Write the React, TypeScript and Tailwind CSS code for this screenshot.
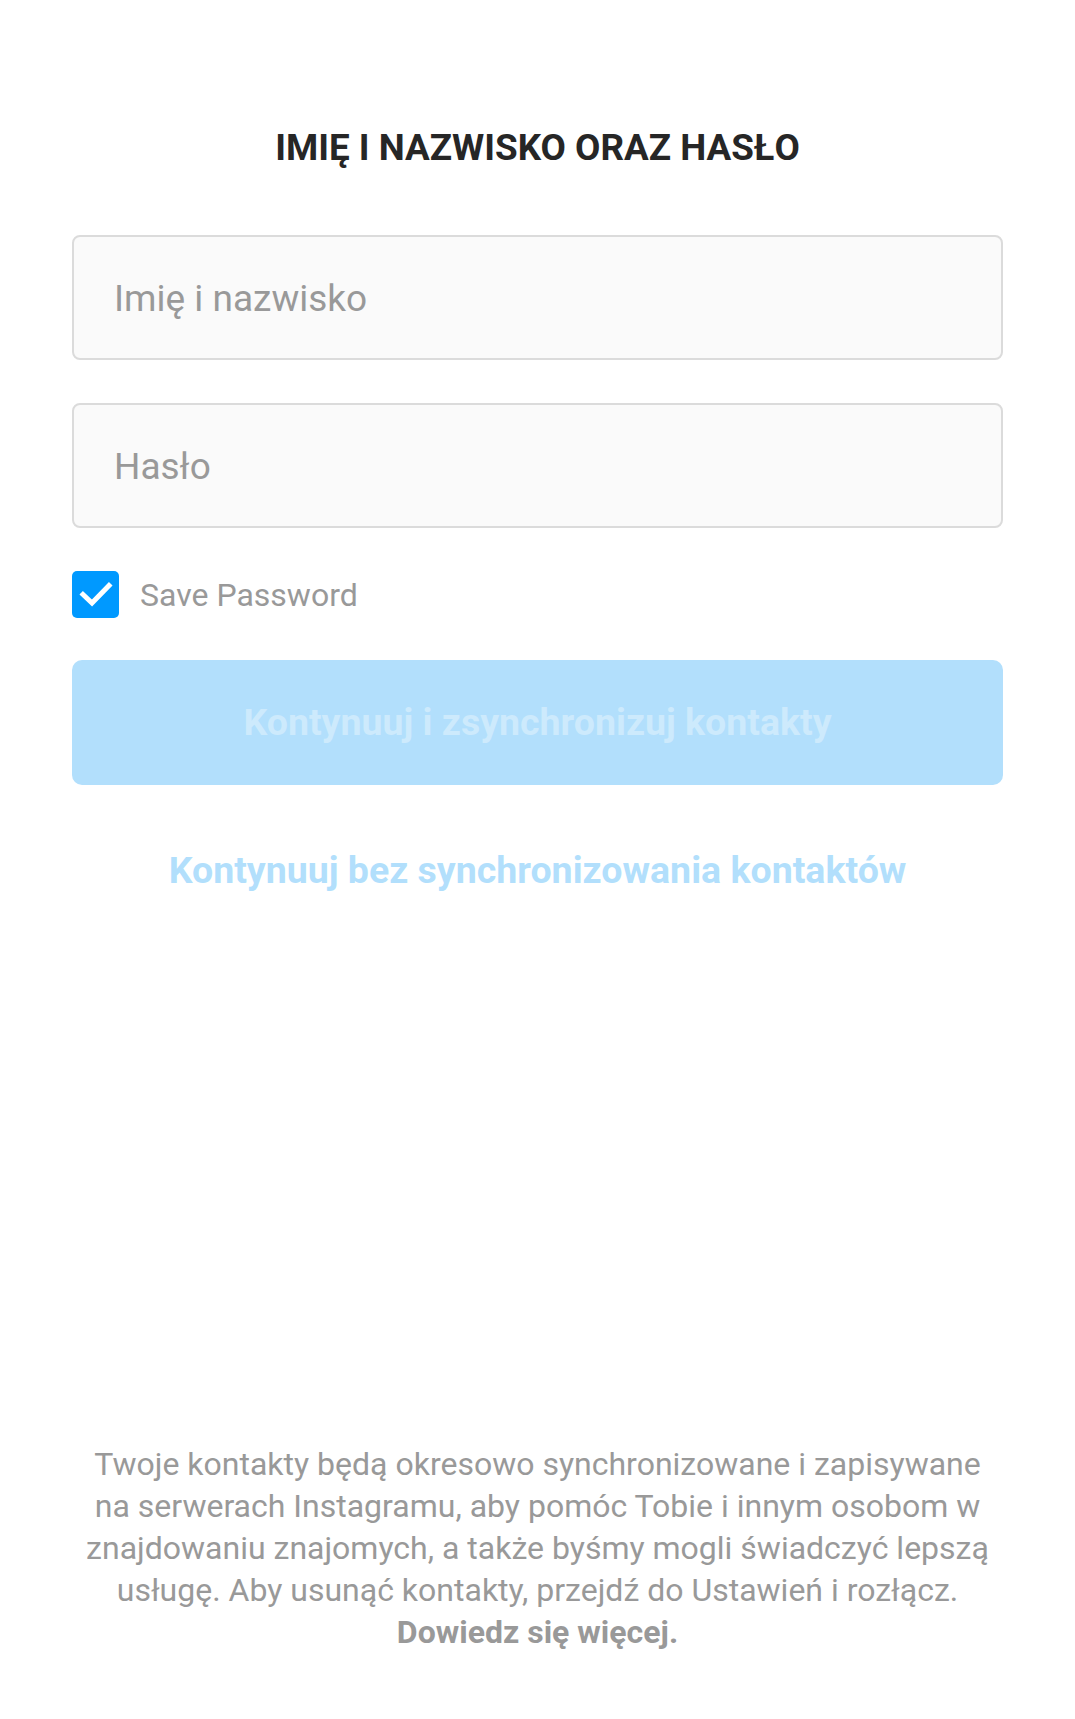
import React from "react";

export default function App() {
  return (
    <div
      className="min-h-screen w-full bg-white flex flex-col"
      style={{ fontFamily: "Roboto, 'Noto Sans', sans-serif" }}
    >
      <div className="px-[72px] pt-[124px] flex flex-col">
        <h1 className="text-center text-[36.8px] leading-[48px] font-bold text-[#262626]">
          IMIĘ I NAZWISKO ORAZ HASŁO
        </h1>

        <div className="mt-[63px] h-[125px] rounded-[8px] border-2 border-[#dbdbdb] bg-[#fafafa] flex items-center px-[40px] pt-[3px]">
          <span className="text-[37px] text-[#999999]">Imię i nazwisko</span>
        </div>

        <div className="mt-[43px] h-[125px] rounded-[8px] border-2 border-[#dbdbdb] bg-[#fafafa] flex items-center px-[40px] pt-[3px]">
          <span className="text-[37px] text-[#999999]">Hasło</span>
        </div>

        <div className="mt-[41px] flex items-center gap-[21px]">
          <div className="w-[47px] h-[47px] rounded-[5px] bg-[#0099ff] flex items-center justify-center">
            <svg width="36" height="36" viewBox="0 0 36 36" fill="none">
              <path
                d="M5 18.5 L14 27 L31 9.5"
                stroke="white"
                strokeWidth="5"
                strokeLinecap="square"
                strokeLinejoin="miter"
              />
            </svg>
          </div>
          <span className="text-[32px] text-[#999999] pt-[2px]">Save Password</span>
        </div>

        <div className="mt-[41px] h-[125px] rounded-[10px] bg-[#b2dffc] flex items-center justify-center">
          <span className="text-[37.5px] font-bold text-[#cdeafc]">
            Kontynuuj i zsynchronizuj kontakty
          </span>
        </div>

        <div className="mt-[57px] text-center">
          <span className="text-[37.5px] font-bold text-[#b2dffc]">
            Kontynuuj bez synchronizowania kontaktów
          </span>
        </div>
      </div>

      <div className="mt-auto pb-[66px] px-[40px] text-center text-[32px] leading-[42px] text-[#999999]">
        Twoje kontakty będą okresowo synchronizowane i zapisywane
        <br />
        na serwerach Instagramu, aby pomóc Tobie i innym osobom w
        <br />
        znajdowaniu znajomych, a także byśmy mogli świadczyć lepszą
        <br />
        usługę. Aby usunąć kontakty, przejdź do Ustawień i rozłącz.
        <br />
        <span className="font-bold">Dowiedz się więcej.</span>
      </div>
    </div>
  );
}
